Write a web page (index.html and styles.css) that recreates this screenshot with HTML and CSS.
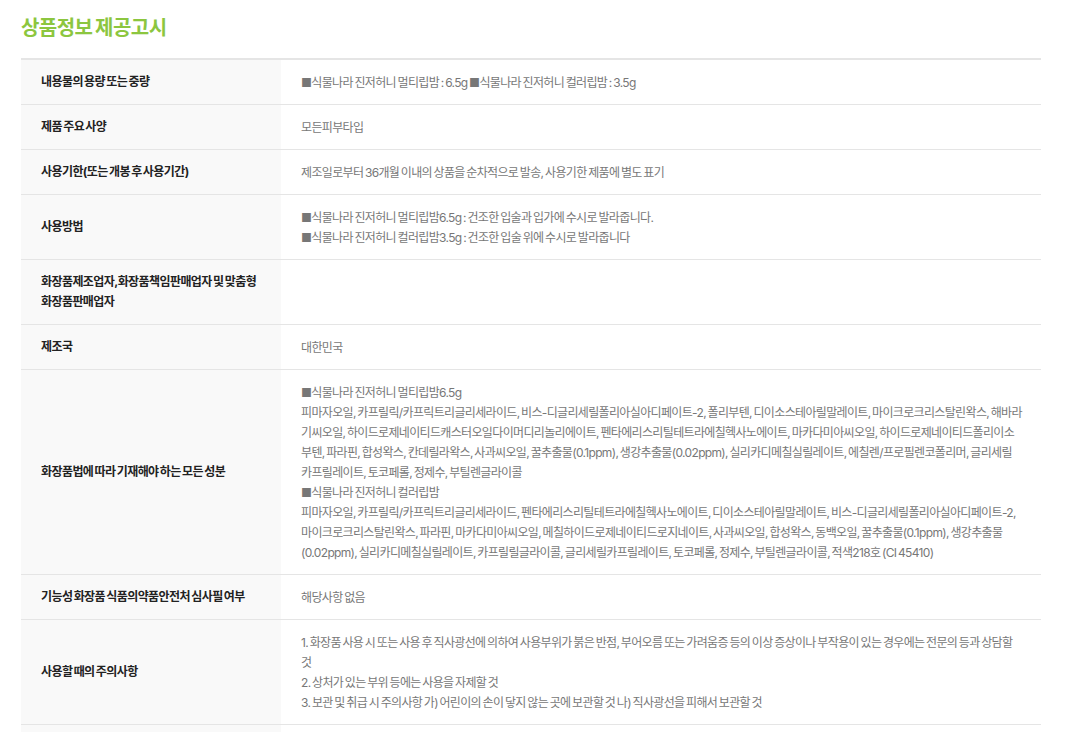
FILE: index.html
```html
<!DOCTYPE html>
<html lang="ko">
<head>
<meta charset="utf-8">
<title>상품정보 제공고시</title>
<link rel="stylesheet" href="styles.css">
</head>
<body>
<section class="notice">
<h2 class="notice-title">상품정보 제공고시</h2>
<table class="notice-table">
<tbody>
<tr><th>내용물의 용량 또는 중량</th><td>■식물나라 진저허니 멀티립밤 : 6.5g ■식물나라 진저허니 컬러립밤 : 3.5g</td></tr>
<tr><th>제품 주요 사양</th><td>모든피부타입</td></tr>
<tr><th>사용기한(또는 개봉 후 사용기간)</th><td>제조일로부터 36개월 이내의 상품을 순차적으로 발송, 사용기한 제품에 별도 표기</td></tr>
<tr><th>사용방법</th><td>■식물나라 진저허니 멀티립밤6.5g : 건조한 입술과 입가에 수시로 발라줍니다.<br>■식물나라 진저허니 컬러립밤3.5g : 건조한 입술 위에 수시로 발라줍니다</td></tr>
<tr><th>화장품제조업자,화장품책임판매업자 및 맞춤형화장품판매업자</th><td></td></tr>
<tr><th>제조국</th><td>대한민국</td></tr>
<tr><th>화장품법에 따라 기재해야 하는 모든 성분</th><td>■식물나라 진저허니 멀티립밤6.5g<br>피마자오일, 카프릴릭/카프릭트리글리세라이드, 비스-디글리세릴폴리아실아디페이트-2, 폴리부텐, 디이소스테아릴말레이트, 마이크로크리스탈린왁스, 해바라기씨오일, 하이드로제네이티드캐스터오일다이머디리놀리에이트, 펜타에리스리틸테트라에칠헥사노에이트, 마카다미아씨오일, 하이드로제네이티드폴리이소부텐, 파라핀, 합성왁스, 칸데릴라왁스, 사과씨오일, 꿀추출물(0.1ppm), 생강추출물(0.02ppm), 실리카디메칠실릴레이트, 에칠렌/프로필렌코폴리머, 글리세릴<br>카프릴레이트, 토코페롤, 정제수, 부틸렌글라이콜<br>■식물나라 진저허니 컬러립밤<br>피마자오일, 카프릴릭/카프릭트리글리세라이드, 펜타에리스리틸테트라에칠헥사노에이트, 디이소스테아릴말레이트, 비스-디글리세릴폴리아실아디페이트-2, 마이크로크리스탈린왁스, 파라핀, 마카다미아씨오일, 메칠하이드로제네이티드로지네이트, 사과씨오일, 합성왁스, 동백오일, 꿀추출물(0.1ppm), 생강추출물(0.02ppm), 실리카디메칠실릴레이트, 카프릴릴글라이콜, 글리세릴카프릴레이트, 토코페롤, 정제수, 부틸렌글라이콜, 적색218호 (CI 45410)</td></tr>
<tr><th>기능성 화장품 식품의약품안전처 심사필 여부</th><td>해당사항 없음</td></tr>
<tr><th>사용할 때의 주의사항</th><td>1. 화장품 사용 시 또는 사용 후 직사광선에 의하여 사용부위가 붉은 반점, 부어오름 또는 가려움증 등의 이상 증상이나 부작용이 있는 경우에는 전문의 등과 상담할 것<br>2. 상처가 있는 부위 등에는 사용을 자제할 것<br>3. 보관 및 취급 시 주의사항 가) 어린이의 손이 닿지 않는 곳에 보관할 것 나) 직사광선을 피해서 보관할 것</td></tr>
<tr class="row-last"><th></th><td></td></tr>
</tbody>
</table>
</section>
</body>
</html>
```
FILE: styles.css
```css
html, body {
  margin: 0;
  padding: 0;
  background: #fff;
}
body {
  font-family: Inter, "Noto Sans CJK KR", sans-serif;
  font-size: 12px;
  line-height: 20px;
  color: #777;
}
.notice {
  width: 1020px;
  margin-left: 21px;
  padding-top: 13px;
}
.notice-title {
  margin: 0 0 15px;
  font-size: 20px;
  line-height: 30px;
  font-weight: 700;
  letter-spacing: -0.55px;
  word-spacing: -1.5px;
  color: #8cc63f;
}
.notice-table {
  width: 100%;
  border-collapse: collapse;
  table-layout: fixed;
  border-top: 2px solid #e5e5e5;
}
.notice-table tr {
  border-bottom: 1px solid #e5e5e5;
}
.notice-table th {
  width: 220px;
  padding: 12px 20px;
  background: #f9f9f9;
  color: #222;
  font-weight: 700;
  text-align: left;
  letter-spacing: -0.58px;
  word-spacing: -1px;
}
.notice-table td {
  padding: 13px 18.5px 11px 20px;
  letter-spacing: -0.66px;
  word-spacing: -1.1px;
}
.row-last {
  height: 44px;
}
```
